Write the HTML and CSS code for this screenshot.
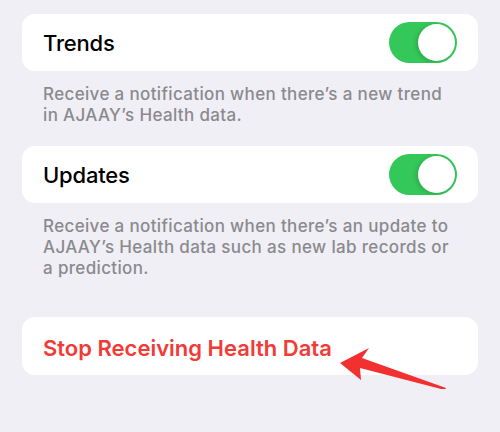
FILE: index.html
```html
<!DOCTYPE html>
<html lang="en">
<head>
    <meta charset="UTF-8">
    <title>Sharing Notifications</title>
    <link rel="stylesheet" href="styles.css">
</head>
<body>
    <div class="settings">
        <div class="cell">
            <span class="label">Trends</span>
            <span class="switch on"><span class="knob"></span></span>
        </div>
        <p class="footer">Receive a notification when there’s a new trend in AJAAY’s Health data.</p>

        <div class="cell">
            <span class="label">Updates</span>
            <span class="switch on"><span class="knob"></span></span>
        </div>
        <p class="footer">Receive a notification when there’s an update to AJAAY’s Health data such as new lab records or a prediction.</p>

        <div class="cell action">
            <span class="label danger">Stop Receiving Health Data</span>
            <!-- pointer arrow drawn over the button -->
            <svg class="pointer" width="120" height="44" viewBox="0 0 120 44">
                <path d="M2 15 L31 0 L24 10 L108 40 L107 42 L22 20 L23 32 Z" fill="#f2302f"/>
            </svg>
        </div>
    </div>
</body>
</html>
```

FILE: styles.css
```css
body{
    margin: 0;
    background-color: #f0eff5;
    font-family: Inter, "Liberation Sans", sans-serif;
}

.settings{
    padding: 14px 22px;
}

/* white rounded row */
.cell{
    position: relative;
    display: flex;
    align-items: center;
    justify-content: space-between;
    height: 57px;
    padding: 0 21px;
    background-color: #ffffff;
    border-radius: 13px;
}

.label{
    font-size: 22px;
    font-weight: 500;
    color: #000000;
    letter-spacing: -0.2px;
}

.footer{
    margin: 13px 0 20px;
    padding: 0 21px;
    font-size: 17px;
    font-weight: 500;
    letter-spacing: 0.35px;
    line-height: 21px;
    color: #8a8a8e;
}

/* toggle switch */
.switch{
    display: flex;
    align-items: center;
    width: 68px;
    height: 41px;
    border-radius: 21px;
    background-color: #34c759;
    padding: 0 2px;
    box-sizing: border-box;
    justify-content: flex-end;
}

.knob{
    width: 37px;
    height: 37px;
    border-radius: 50%;
    background-color: #ffffff;
    box-shadow: -2px 1px 4px rgba(0, 0, 0, 0.15);
}

.action{
    margin-top: 38px;
    height: 58px;
}

.danger{
    color: #f23a37;
    font-size: 22px;
    font-weight: 600;
    letter-spacing: 0;
    padding-top: 4px;
}

.pointer{
    position: absolute;
    left: 316px;
    top: 31px;
}
```
